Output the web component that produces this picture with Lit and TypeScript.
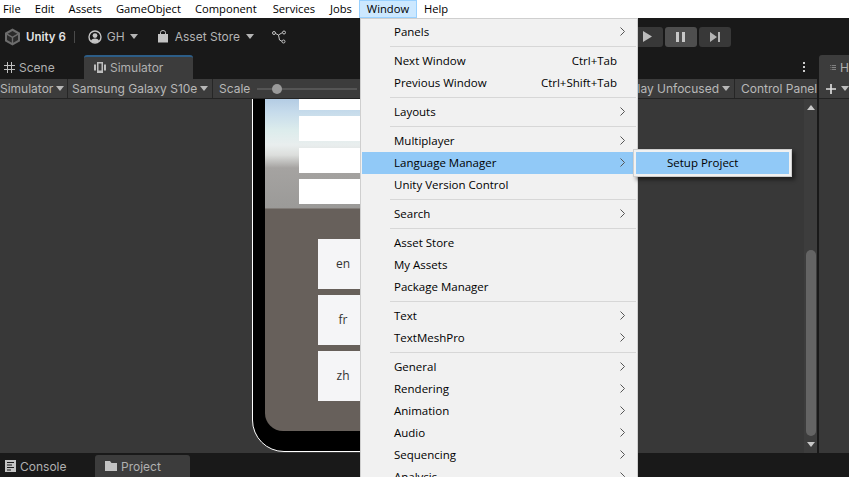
import { LitElement, html, css, svg } from 'lit';
import { customElement } from 'lit/decorators.js';

type Row = { label?: string; shortcut?: string; sub?: boolean; active?: boolean; sep?: boolean };

const MENU_BAR = ['File', 'Edit', 'Assets', 'GameObject', 'Component', 'Services', 'Jobs', 'Window', 'Help'];

const WINDOW_MENU: Row[] = [
  { label: 'Panels', sub: true },
  { sep: true },
  { label: 'Next Window', shortcut: 'Ctrl+Tab' },
  { label: 'Previous Window', shortcut: 'Ctrl+Shift+Tab' },
  { sep: true },
  { label: 'Layouts', sub: true },
  { sep: true },
  { label: 'Multiplayer', sub: true },
  { label: 'Language Manager', sub: true, active: true },
  { label: 'Unity Version Control' },
  { sep: true },
  { label: 'Search', sub: true },
  { sep: true },
  { label: 'Asset Store' },
  { label: 'My Assets' },
  { label: 'Package Manager' },
  { sep: true },
  { label: 'Text', sub: true },
  { label: 'TextMeshPro', sub: true },
  { sep: true },
  { label: 'General', sub: true },
  { label: 'Rendering', sub: true },
  { label: 'Animation', sub: true },
  { label: 'Audio', sub: true },
  { label: 'Sequencing', sub: true },
  { label: 'Analysis', sub: true },
];

const caret = html`<svg class="caret" width="8" height="5" viewBox="0 0 8 5"><path d="M0 0h8L4 5z" fill="currentColor"/></svg>`;
const chevron = svg`<svg class="chev" width="5" height="9" viewBox="0 0 5 9"><path d="M.5.5l4 4-4 4" fill="none" stroke="#555" stroke-width="1"/></svg>`;

@customElement('app-root')
export class AppRoot extends LitElement {
  static styles = css`
    :host {
      display: block;
      position: relative;
      width: 849px;
      height: 477px;
      overflow: hidden;
      font-family: Inter, 'Noto Sans', sans-serif;
      font-size: 12px;
      color: #bdbdbd;
      background: #191919;
    }
    .menubar {
      display: flex;
      height: 18px;
      padding-left: 3px;
      background: #fff;
      color: #000;
      font-family: 'Open Sans', sans-serif;
      font-size: 11.2px;
      line-height: 17px;
    }
    .menubar span { padding: 0 7px; box-sizing: border-box; }
    .menubar span:first-child { padding-left: 0; }
    .menubar span:nth-child(6) { margin-left: 2px; }
    .menubar span:nth-child(7) { margin-left: 1px; }
    .menubar span.open { width: 58px; padding: 0; text-align: center; background: #cce8ff; box-shadow: inset 0 0 0 1px #99d1ff; }
    .toolbar {
      display: flex;
      align-items: center;
      height: 37px;
      padding: 0 0 0 4px;
      box-sizing: border-box;
      background: #191919;
    }
    .brand { display: flex; align-items: center; gap: 5px; color: #e4e4e4; font-weight: 600; font-size: 11.5px; }
    .vr { width: 1px; height: 12px; background: #4a4a4a; margin: 0 13px 0 8px; }
    .drop { display: flex; align-items: center; gap: 6px; color: #b4b4b4; }
    .drop.account { gap: 5px; margin-right: 19px; }
    .drop.store { gap: 6px; margin-right: 18px; }
    .caret { flex: none; }
    .play { display: flex; gap: 2px; margin-left: 345px; }
    .play div { width: 32px; height: 20px; border-radius: 3px; background: #383838; display: flex; align-items: center; justify-content: center; }
    .play div.on { background: #4e4e4e; }
    .dock { display: flex; height: 398px; background: #191919; }
    .left { flex: none; width: 817px; display: flex; flex-direction: column; }
    .divider { flex: none; width: 2px; background: #191919; }
    .right { flex: 1; min-width: 0; overflow: hidden; display: flex; flex-direction: column; }
    .tabs { display: flex; height: 24px; align-items: stretch; position: relative; }
    .tab { display: flex; align-items: center; gap: 4px; box-sizing: border-box; padding-left: 4px; color: #b0b0b0; }
    .tab.scene { width: 84px; }
    .tab.sim { width: 109px; padding: 0 0 2px 10px; background: #3c3c3c; border-top: 2px solid #2c5d87; border-radius: 3px 3px 0 0; }
    .kebab { margin-left: auto; margin-right: 12px; align-self: center; display: flex; flex-direction: column; gap: 2px; }
    .kebab i { display: block; width: 2px; height: 2px; background: #ccc; }
    .strip { display: flex; height: 20px; background: #3c3c3c; border-bottom: 1px solid #232323; box-sizing: border-box; line-height: 19px; white-space: nowrap; overflow: hidden; color: #b8b8b8; }
    .seg { display: flex; align-items: center; gap: 3px; border-right: 1px solid #262626; box-sizing: border-box; padding: 0 5px 0 4px; flex: none; }
    .seg.first { width: 68px; padding: 0; }
    .seg.model { width: 145px; }
    .scale { display: flex; align-items: center; gap: 7px; padding-left: 6px; flex: none; }
    .slider { position: relative; width: 100px; height: 2px; background: #555; }
    .slider i { position: absolute; left: 15px; top: -4px; width: 10px; height: 10px; border-radius: 50%; background: #9a9a9a; }
    .seg.unfocused { margin-left: auto; width: 120px; justify-content: flex-end; padding-right: 4px; }
    .seg.panel { border: 0; width: 82px; padding: 0 0 0 6px; }
    .body { position: relative; flex: 1; display: flex; background: #383838; overflow: hidden; }
    .viewport { position: relative; flex: 1; overflow: hidden; }
    .phone {
      position: absolute;
      left: 252px;
      top: -60px;
      width: 370px;
      height: 413px;
      box-sizing: border-box;
      background: #000;
      border: 1px solid #fff;
      border-radius: 32px;
    }
    .screen {
      position: absolute;
      left: 12px;
      right: 12px;
      top: 12px;
      bottom: 20px;
      border-radius: 18px;
      overflow: hidden;
      background: #67605b;
    }
    .sky {
      height: 157px;
      background: linear-gradient(180deg, #b5cde4 0, #b5cde4 48px, #c6dbeb 60px, #dcecec 78px, #e9eeee 93px, #dcdedc 103px, #a5a3a1 116px, #9b9a98 156px);
      border-bottom: 1px solid #817c78;
      box-sizing: border-box;
    }
    .btn { position: absolute; left: 299px; width: 70px; height: 25px; background: #fff; }
    .lang {
      position: absolute;
      left: 318px;
      width: 120px;
      height: 50px;
      line-height: 49px;
      background: #f5f5f7;
      color: #333;
      font-family: 'Open Sans', sans-serif;
      font-size: 12px;
    }
    .lang span { display: block; width: 50px; text-align: center; }
    .scroll { flex: none; width: 13px; background: #3d3d3d; position: relative; }
    .scroll .thumb { position: absolute; top: 151px; left: 2px; width: 10px; height: 186px; border-radius: 5px; background: #646464; }
    .scroll .up { position: absolute; top: 6px; left: 3px; }
    .scroll .down { position: absolute; top: 343px; left: 3px; }
    .hier-tab { display: flex; align-items: center; gap: 4px; height: 24px; padding-left: 11px; background: #3c3c3c; border-radius: 3px 0 0 0; box-sizing: border-box; color: #b0b0b0; }
    .hier-strip { display: flex; align-items: center; gap: 5px; height: 20px; padding-left: 7px; background: #3c3c3c; border-bottom: 1px solid #232323; box-sizing: border-box; }
    .hier-body { flex: 1; background: #383838; }
    .bottom { display: flex; height: 24px; padding-top: 2px; box-sizing: border-box; background: #191919; color: #b0b0b0; }
    .btab { display: flex; align-items: center; gap: 4px; box-sizing: border-box; }
    .btab.console { width: 95px; padding-left: 5px; }
    .btab.project { width: 95px; padding-left: 10px; background: #3c3c3c; border-radius: 3px 3px 0 0; }
    .menu {
      position: absolute;
      left: 360px;
      top: 18px;
      width: 278px;
      height: 470px;
      box-sizing: border-box;
      padding: 2px 1px 0 1px;
      background: #f1f1f1;
      border: 1px solid #cfcfcf;
      color: #000;
      font-family: 'Open Sans', sans-serif;
      font-size: 11.5px;
    }
    .row { position: relative; display: flex; align-items: center; height: 22px; padding-left: 32px; width: 271px; box-sizing: border-box; line-height: 20px; }
    .row.active { background: #91c9f7; }
    .row .short { position: absolute; right: 16px; }
    .row .chev { position: absolute; right: 8px; top: 6px; }
    .sep { height: 7px; display: flex; align-items: center; padding-left: 28px; box-sizing: border-box; }
    .sep::after { content: ''; display: block; height: 1px; flex: 1; background: #d7d7d7; }
    .submenu {
      position: absolute;
      left: 633px;
      top: 149px;
      width: 159px;
      height: 28px;
      box-sizing: border-box;
      padding: 2px;
      background: #f1f1f1;
      border: 1px solid #cfcfcf;
      box-shadow: 3px 3px 4px rgba(0, 0, 0, 0.45);
      color: #000;
      font-family: 'Open Sans', sans-serif;
      font-size: 11.5px;
    }
    .submenu div { height: 22px; line-height: 21px; padding-left: 31px; background: #91c9f7; }
  `;

  render() {
    return html`
      <div class="menubar">
        ${MENU_BAR.map((m) => html`<span class=${m === 'Window' ? 'open' : ''}>${m}</span>`)}
      </div>
      <div class="toolbar">
        <div class="brand">
          <svg width="17" height="18" viewBox="0 0 17 18">
            <path d="M8.5.5l7.5 4.2v8.6l-7.5 4.2L1 13.3V4.7z" fill="#6d6d6d"/>
            <path d="M8.5 3l4.8 2.8-4.8 2.8-4.8-2.8zM3 7l4.8 2.8v5L3 12zM14 7l-4.8 2.8v5L14 12z" fill="#2b2b2b"/>
          </svg>
          Unity 6
        </div>
        <div class="vr"></div>
        <div class="drop account">
          <svg width="14" height="14" viewBox="0 0 14 14">
            <circle cx="7" cy="7" r="6" fill="none" stroke="#c4c4c4" stroke-width="1.4"/>
            <circle cx="7" cy="5.6" r="2.4" fill="#c4c4c4"/>
            <path d="M2.8 11c1-2 2.4-2.6 4.2-2.6s3.200.6 4.200 2.600c-1 1.200-2.600 1.800-4.200 1.800s-3.200-.6-4.200-1.800z" fill="#c4c4c4"/>
          </svg>
          <span>GH</span>${caret}
        </div>
        <div class="drop store">
          <svg width="12" height="13" viewBox="0 0 12 13">
            <path d="M1 4h10v8.500H1z" fill="#c4c4c4"/>
            <path d="M3.500 5V2.500a2.500 2 0 0 1 5 0V5" fill="none" stroke="#c4c4c4"/>
          </svg>
          <span>Asset Store</span>${caret}
        </div>
        <svg width="14" height="14" viewBox="0 0 14 14" fill="none" stroke="#c4c4c4">
          <circle cx="2" cy="3" r="1.500"/><circle cx="12" cy="2.500" r="1.500"/><circle cx="11.500" cy="11.500" r="1.500"/>
          <path d="M3.500 3.500l3 1.500 4-2.500M6.500 5l1 5 2.500 1.300"/>
        </svg>
        <div class="play">
          <div>
            <svg width="10" height="11" viewBox="0 0 10 11"><path d="M1 0l9 5.500-9 5.500z" fill="#bdbdbd"/></svg>
          </div>
          <div class="on">
            <svg width="9" height="10" viewBox="0 0 9 10"><path d="M0 0h3v10H0zM6 0h3v10H6z" fill="#c8c8c8"/></svg>
          </div>
          <div>
            <svg width="10" height="10" viewBox="0 0 10 10"><path d="M0 0l7 5-7 5zM8 0h2v10H8z" fill="#b4b4b4"/></svg>
          </div>
        </div>
      </div>
      <div class="dock">
        <div class="left">
          <div class="tabs">
            <div class="tab scene">
              <svg width="11" height="11" viewBox="0 0 11 11" stroke="#c0c0c0" fill="none"><path d="M3.500 0v11M7.500 0v11M0 3.500h11M0 7.500h11"/></svg>
              <span>Scene</span>
            </div>
            <div class="tab sim">
              <svg width="12" height="11" viewBox="0 0 12 11" fill="#bdbdbd"><path d="M3 0h6v11H3zM0 2.500h2v6H0zM10 2.500h2v6h-2z"/><path d="M4.500 1.500h3v7h-3z" fill="#3c3c3c"/></svg>
              <span>Simulator</span>
            </div>
            <div class="kebab"><i></i><i></i><i></i></div>
          </div>
          <div class="strip">
            <div class="seg first"><span>Simulator</span>${caret}</div>
            <div class="seg model"><span>Samsung Galaxy S10e</span>${caret}</div>
            <div class="scale"><span>Scale</span><div class="slider"><i></i></div></div>
            <div class="seg unfocused"><span>Play Unfocused</span>${caret}</div>
            <div class="seg panel"><span>Control Panel</span></div>
          </div>
          <div class="body">
            <div class="viewport">
              <div class="phone">
                <div class="screen"><div class="sky"></div></div>
              </div>
              <div class="btn" style="top:0;height:11px"></div>
              <div class="btn" style="top:17px"></div>
              <div class="btn" style="top:49px"></div>
              <div class="btn" style="top:80px"></div>
              <div class="lang" style="top:140px"><span>en</span></div>
              <div class="lang" style="top:196px"><span>fr</span></div>
              <div class="lang" style="top:252px"><span>zh</span></div>
            </div>
            <div class="scroll">
              <svg class="up" width="8" height="5" viewBox="0 0 8 5"><path d="M4 0l4 5H0z" fill="#c8c8c8"/></svg>
              <div class="thumb"></div>
              <svg class="down" width="8" height="5" viewBox="0 0 8 5"><path d="M0 0h8L4 5z" fill="#c8c8c8"/></svg>
            </div>
          </div>
        </div>
        <div class="divider"></div>
        <div class="right">
          <div class="hier-tab">
            <svg width="11" height="9" viewBox="0 0 11 9" stroke="#c0c0c0" fill="none"><path d="M3 1h8M3 4.500h8M3 8h8M0 1h1.500M1 4.500h1M1 8h1"/></svg>
            <span>H</span>
          </div>
          <div class="hier-strip">
            <svg width="12" height="12" viewBox="0 0 12 12"><path d="M5 0h2v5h5v2H7v5H5V7H0V5h5z" fill="#ddd"/></svg>
            ${caret}
          </div>
          <div class="hier-body"></div>
        </div>
      </div>
      <div class="bottom">
        <div class="btab console">
          <svg width="11" height="12" viewBox="0 0 11 12"><path d="M0 0h11v12H0z" fill="#c4c4c4"/><path d="M2 2.500h7M2 5h5M2 7.500h7M2 10h4" stroke="#191919"/></svg>
          <span>Console</span>
        </div>
        <div class="btab project">
          <svg width="12" height="10" viewBox="0 0 12 10"><path d="M0 0h5l1.500 2H12v8H0z" fill="#c4c4c4"/></svg>
          <span>Project</span>
        </div>
      </div>
      <div class="menu">
        ${WINDOW_MENU.map((r) =>
          r.sep
            ? html`<div class="sep"></div>`
            : html`<div class="row ${r.active ? 'active' : ''}">
                <span>${r.label}</span>
                ${r.shortcut ? html`<span class="short">${r.shortcut}</span>` : ''}
                ${r.sub ? chevron : ''}
              </div>`,
        )}
      </div>
      <div class="submenu"><div>Setup Project</div></div>
    `;
  }
}
